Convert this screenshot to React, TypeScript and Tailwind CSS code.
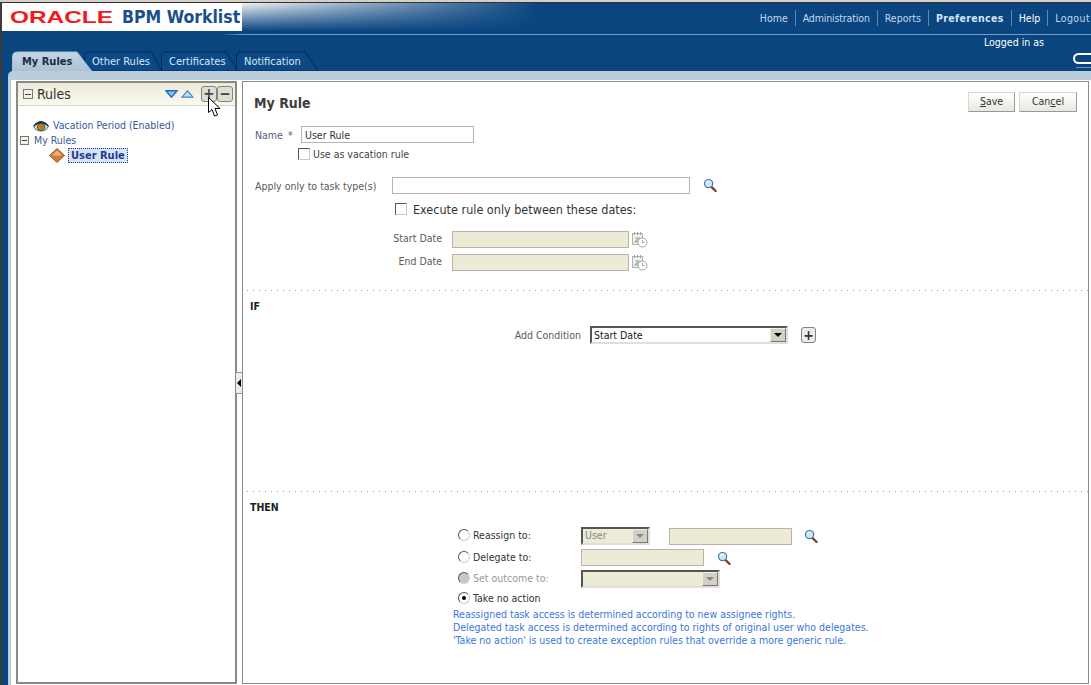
const NAV = [
  { label: 'Home', cls: 'text-[#c5d8ee]' },
  { label: 'Administration', cls: 'text-[#c5d8ee] tracking-[-0.15px]' },
  { label: 'Reports', cls: 'text-[#c5d8ee]' },
  { label: 'Preferences', cls: 'text-[#d5e3f3] font-bold tracking-[0.35px]' },
  { label: 'Help', cls: 'text-white' },
  { label: 'Logout', cls: 'text-[#c5d8ee] tracking-[0.4px]' },
]

function Tab({ label, active, width, wrap, peak }: { label: string; active?: boolean; width: number; wrap: string; peak: number }) {
  const d = `M0.5 20 L0.5 6 Q0.5 1 5.5 1 L${peak} 1 L${width - 0.5} 20`
  return (
    <div className={`relative h-[20px] shrink-0 ${wrap}`}>
      <svg width={width} height={20} className="absolute left-0 top-0">
        <defs>
          <linearGradient id="tabon" x1="0" x2="0" y1="0" y2="1">
            <stop offset="0" stopColor="#c4d6e4" />
            <stop offset="1" stopColor="#a9c2d6" />
          </linearGradient>
        </defs>
        <path d={d + ' Z'} fill={active ? 'url(#tabon)' : '#0b4a87'} stroke={active ? '#a9c2d6' : '#062a55'} />
      </svg>
      <span className={`relative block text-[11px] leading-[21px] whitespace-nowrap ${active ? 'pl-[10px] font-bold text-[#1c2a3c]' : 'pl-[8px] text-[#dbe7f3]'}`}>{label}</span>
    </div>
  )
}

function Magnifier() {
  return (
    <svg width="14" height="14" viewBox="0 0 15 15" className="shrink-0">
      <path d="M9 9.5 L13.5 14" stroke="#8a3a20" strokeWidth="2.4" strokeLinecap="round" />
      <circle cx="6" cy="6" r="4.4" fill="#cfe6f4" stroke="#3f7aa8" strokeWidth="1.3" />
      <path d="M3.5 5.5 A3 3 0 0 1 6 3.2" fill="none" stroke="#fff" strokeWidth="1.2" />
    </svg>
  )
}

function CalendarClock() {
  return (
    <svg width="17" height="17" viewBox="0 0 17 17" className="shrink-0">
      <rect x="1.5" y="2.5" width="10" height="11" fill="#f3f3ee" stroke="#b0b4b0" />
      <path d="M3.5 1 v3 M6.5 1 v3 M9.5 1 v3" stroke="#a0a4a0" />
      <path d="M4 7 h4 l-4 4 h4" fill="none" stroke="#a0a4a0" strokeWidth="1.2" />
      <circle cx="11.5" cy="11.5" r="4.5" fill="#fff" stroke="#a0a4a0" />
      <path d="M11.5 9 v2.5 h2.2" fill="none" stroke="#a0a4a0" />
    </svg>
  )
}

function Check() {
  return <div className="h-[12px] w-[12px] shrink-0 border border-b-[#c8c8c8] border-l-[#555] border-r-[#c8c8c8] border-t-[#555] bg-white" />
}

function Radio({ on, off }: { on?: boolean; off?: boolean }) {
  return (
    <div className={`flex h-[12px] w-[12px] shrink-0 -translate-y-px items-center justify-center rounded-full border border-b-[#d0d0d0] border-l-[#555] border-r-[#d0d0d0] border-t-[#555] ${off ? 'bg-[#c8c8c0]' : 'bg-white'}`}>
      {on && <div className="h-[4px] w-[4px] rounded-full bg-black" />}
    </div>
  )
}

function Arrow({ grey }: { grey?: boolean }) {
  return (
    <div className="flex h-full w-[16px] shrink-0 items-center justify-center border border-b-[#777] border-l-[#eee] border-r-[#777] border-t-[#eee] bg-[#d4d0c8]">
      <div className={`h-0 w-0 border-x-[4px] border-t-[4px] border-x-transparent ${grey ? 'border-t-[#888]' : 'border-t-black'}`} />
    </div>
  )
}

function Dots() {
  return <div className="ml-[4px] h-px bg-[repeating-linear-gradient(to_right,#999_0,#999_1px,transparent_1px,transparent_6px)]" />
}

export default function App() {
  return (
    <div className="relative flex h-[685px] w-[1091px] flex-col overflow-hidden bg-white font-['DejaVu_Sans_Condensed','DejaVu_Sans',sans-serif] text-[10.5px] [font-stretch:condensed]">
      <div className="h-[3px] shrink-0 border-b border-[#333] bg-[#d4d0c8]" />

      <div className="relative h-[68px] shrink-0 border-l-2 border-[#3c3c3c] bg-[#0a4580]">
        <div className="flex h-[28px]">
          <div className="flex w-[240px] shrink-0 items-center bg-white pl-[8px]">
            <svg width="106" height="20" className="shrink-0">
              <text x="0" y="16" fontFamily="Liberation Sans" fontSize="17" fontWeight="700" fill="#f01c1c" textLength="103" lengthAdjust="spacingAndGlyphs">ORACLE</text>
            </svg>
            <span className="ml-[6px] text-[17.5px] font-bold whitespace-nowrap text-[#1a4f8c]">BPM Worklist</span>
          </div>
          <div className="flex flex-1 items-center justify-end bg-[linear-gradient(to_right,transparent,#0a4580_35%),linear-gradient(to_bottom,#f0f2f5,#0a4580)] pt-[2px]">
            {NAV.map((n, i) => (
              <span key={n.label} className={`px-[7px] leading-[16px] whitespace-nowrap last:pr-[1px] ${i > 0 ? 'border-l border-[#5f8ab8]' : ''} ${n.cls}`}>{n.label}</span>
            ))}
          </div>
        </div>
        <div className="mt-[3px] h-px bg-[linear-gradient(to_right,transparent_20%,#6f9ed0_22%)]" />
        <div className="h-[16px] pr-[47px] text-right leading-[15px] text-white">Logged in as</div>
        <div className="flex h-[20px] items-start justify-between pl-[10px]">
          <div className="flex">
            <Tab label="My Rules" active width={80} peak={65} wrap="z-40 w-[80px]" />
            <Tab label="Other Rules" width={78} peak={67} wrap="z-30 -ml-[8px] w-[78px]" />
            <Tab label="Certificates" width={77} peak={65} wrap="z-20 -ml-[1px] w-[77px]" />
            <Tab label="Notification" width={82} peak={69} wrap="z-10 -ml-[2px] w-[82px]" />
          </div>
          <div className="mt-[2px] w-[18px] overflow-hidden">
            <div className="h-[11px] w-[30px] rounded-full border-2 border-white" />
            <div className="mt-[3px] ml-[3px] h-px bg-[#6f93b8]" />
          </div>
        </div>
      </div>

      <div className="flex min-h-0 flex-1 border-l-2 border-[#3c3c3c] bg-[#0a4580] pl-[6px]">
        <div className="flex min-w-0 flex-1 flex-col rounded-tl-[5px] bg-[#b9cddd] pt-[9px] pl-[3px]">
          <div className="flex min-h-0 flex-1 bg-white pl-[5px] pt-px pr-[2px] pb-px">
            {/* left panel */}
            <div className="flex w-[221px] shrink-0 flex-col border-2 border-[#8a8a80]">
              <div className="flex h-[23px] shrink-0 items-center border-b border-[#d4d4bc] bg-[linear-gradient(to_bottom,#ecebd9,#f9f9f1)] pl-[5px] pr-[2px]">
                <div className="flex h-[10px] w-[10px] shrink-0 items-center justify-center border border-[#777] bg-[#f2f2ea]">
                  <div className="h-px w-[6px] bg-[#444]" />
                </div>
                <span className="ml-[4px] text-[14px] text-[#333]">Rules</span>
                <svg width="13" height="8" viewBox="0 0 13 8" className="ml-auto shrink-0">
                  <path d="M1 0.8 H12 L6.5 7.2 Z" fill="#8cc4ee" stroke="#1f6cc0" strokeWidth="1.4" />
                </svg>
                <svg width="13" height="8" viewBox="0 0 13 8" className="ml-[3px] shrink-0">
                  <path d="M1 7.2 H12 L6.5 0.8 Z" fill="#c4e0f6" stroke="#3f8ad0" strokeWidth="1.2" />
                </svg>
                <div className="ml-[7px] flex h-[16px] w-[16px] items-center justify-center rounded-[3px] border border-[#80847c] bg-[#dedfd4] text-[15px] font-bold leading-none text-[#444]">+</div>
                <div className="flex h-[16px] w-[16px] items-center justify-center rounded-[3px] border border-[#80847c] bg-[#dedfd4] text-[15px] font-bold leading-none text-[#444]">−</div>
              </div>
              <div className="pt-[12px] text-[#3c5696]">
                <div className="flex h-[15px] items-center pl-[15px]">
                  <svg width="16" height="12" viewBox="0 0 16 12" className="shrink-0">
                    <ellipse cx="8" cy="6.5" rx="7" ry="4.5" fill="#cfd9e4" stroke="#5a7088" />
                    <path d="M0.5 6 Q8 -3 15.5 6 Q8 0.5 0.5 6 Z" fill="#1f2f42" stroke="#1f2f42" />
                    <circle cx="8" cy="7" r="3.6" fill="#b98a2a" stroke="#5b4a2a" />
                    <circle cx="8" cy="7" r="1.3" fill="#e85a10" />
                  </svg>
                  <span className="ml-[4px] whitespace-nowrap">Vacation Period (Enabled)</span>
                </div>
                <div className="flex h-[15px] items-center pl-[2px]">
                  <div className="flex h-[9px] w-[9px] shrink-0 items-center justify-center border border-[#777] bg-[#f2f2ea]">
                    <div className="h-px w-[5px] bg-[#444]" />
                  </div>
                  <span className="ml-[5px]">My Rules</span>
                </div>
                <div className="-mt-[1px] flex h-[16px] items-center pl-[31px]">
                  <svg width="16" height="15" viewBox="0 0 16 15" className="shrink-0">
                    <path d="M8 0.5 L15.5 7.5 L8 14.5 L0.5 7.5 Z" fill="#d07a3e" stroke="#9a6038" />
                    <path d="M8 2.5 L13 7.5 L8 7.5 L3 7.5 Z" fill="#f0b078" />
                  </svg>
                  <span className="ml-[3px] border border-dotted border-[#1f3a8a] bg-[#d8e4f4] px-[2px] text-[11px] font-bold leading-[13px] text-[#1c3a96]">User Rule</span>
                </div>
              </div>
            </div>

            {/* splitter */}
            <div className="flex w-[5px] shrink-0 items-center">
              <div className="flex h-[22px] w-[6px] shrink-0 -translate-x-px items-center justify-center border-y border-[#7f9cc0] bg-[#e6edf5]">
                <div className="h-0 w-0 border-y-[4px] border-r-[4px] border-y-transparent border-r-black" />
              </div>
            </div>

            {/* right panel */}
            <div className="min-w-0 flex-1 border border-[#8a8a8a]">
              <div className="flex items-start justify-between pl-[11px] pr-[11px] pt-[10px]">
                <span className="translate-y-px text-[14px] font-bold leading-[20px] text-[#3c3c3c]">My Rule</span>
                <div className="flex gap-[4px]">
                  <div className="flex h-[20px] w-[47px] items-center justify-center border border-[#d8d8d0] border-b-[#999] border-r-[#999] bg-[linear-gradient(to_bottom,#fff,#e8e8e0)] text-[#333]"><span><u>S</u>ave</span></div>
                  <div className="flex h-[20px] w-[58px] items-center justify-center border border-[#d8d8d0] border-b-[#999] border-r-[#999] bg-[linear-gradient(to_bottom,#fff,#e8e8e0)] text-[#333]"><span>Can<u>c</u>el</span></div>
                </div>
              </div>

              <div className="mt-[14px] flex h-[17px] items-center pl-[12px] text-[#556078]">
                <span className="w-[33px] shrink-0 translate-y-px">Name</span>
                <span className="w-[13px] shrink-0 translate-y-px">*</span>
                <div className="flex h-full w-[173px] items-center border border-[#c0aeb2] pl-[3px] text-[#333]"><span className="translate-y-px">User Rule</span></div>
              </div>
              <div className="mt-[4px] flex h-[14px] items-center pl-[55px] text-[#444]">
                <Check />
                <span className="ml-[3px] translate-y-px">Use as vacation rule</span>
              </div>

              <div className="mt-[16px] flex h-[17px] items-center pl-[12px] text-[#5a5a5a]">
                <span className="w-[137px] shrink-0 translate-y-px whitespace-nowrap">Apply only to task type(s)</span>
                <div className="h-full w-[298px] shrink-0 border border-[#c0aeb2]" />
                <div className="ml-[13px] -translate-y-px"><Magnifier /></div>
              </div>
              <div className="mt-[8px] flex h-[14px] items-center pl-[152px] text-[12.5px] text-[#333]">
                <Check />
                <span className="ml-[6px] translate-y-px whitespace-nowrap">Execute rule only between these dates:</span>
              </div>

              <div className="mt-[15px] flex h-[17px] items-center text-[#5f5a4e]">
                <span className="w-[199px] shrink-0 -translate-y-px text-right">Start Date</span>
                <div className="ml-[10px] h-full w-[177px] shrink-0 border border-[#c0aeb2] bg-[#ebebd6]" />
                <div className="ml-[2px]"><CalendarClock /></div>
              </div>
              <div className="mt-[6px] flex h-[17px] items-center text-[#5f5a4e]">
                <span className="w-[199px] shrink-0 -translate-y-px text-right">End Date</span>
                <div className="ml-[10px] h-full w-[177px] shrink-0 border border-[#c0aeb2] bg-[#ebebd6]" />
                <div className="ml-[2px]"><CalendarClock /></div>
              </div>

              <div className="mt-[19px]"><Dots /></div>
              <div className="h-[200px] pt-[9px]">
                <div className="pl-[7px] font-bold leading-[13px] text-[#222]">IF</div>
                <div className="mt-[13px] flex h-[17px] items-center text-[#5f5a4e]">
                  <span className="w-[338px] shrink-0 translate-y-px text-right">Add Condition</span>
                  <div className="ml-[9px] flex h-[18px] w-[198px] shrink-0 items-center border-2 border-b-[#e0e0d8] border-l-[#555] border-r-[#e0e0d8] border-t-[#555] bg-white pl-[2px] text-[#222]">
                    <span className="flex-1 translate-y-px">Start Date</span>
                    <Arrow />
                  </div>
                  <div className="ml-[13px] flex h-[16px] w-[15px] items-center justify-center rounded-[3px] border border-[#80847c] bg-[#ecede6] text-[14px] font-bold leading-none text-[#334]">+</div>
                </div>
              </div>

              <Dots />
              <div className="mt-[9px] pl-[7px] font-bold leading-[13px] text-[#222]">THEN</div>

              <div className="mt-[13px] flex h-[18px] items-center pl-[215px] text-[#333]">
                <Radio />
                <span className="ml-[3px] w-[108px] shrink-0">Reassign to:</span>
                <div className="flex h-full w-[69px] shrink-0 items-center border-2 border-b-[#e0e0d8] border-l-[#555] border-r-[#e0e0d8] border-t-[#555] bg-[#ebebd6] pl-[2px] text-[#888]">
                  <span className="flex-1">User</span>
                  <Arrow grey />
                </div>
                <div className="ml-[19px] h-[17px] w-[123px] shrink-0 border border-[#c0aeb2] bg-[#ebebd6]" />
                <div className="ml-[12px]"><Magnifier /></div>
              </div>
              <div className="mt-[4px] flex h-[17px] items-center pl-[215px] text-[#333]">
                <Radio />
                <span className="ml-[3px] w-[108px] shrink-0">Delegate to:</span>
                <div className="h-full w-[123px] shrink-0 border border-[#c0aeb2] bg-[#ebebd6]" />
                <div className="ml-[13px]"><Magnifier /></div>
              </div>
              <div className="mt-[4px] flex h-[18px] items-center pl-[215px] text-[#999]">
                <Radio off />
                <span className="ml-[3px] w-[108px] shrink-0">Set outcome to:</span>
                <div className="flex h-full w-[139px] shrink-0 items-center justify-end border-2 border-b-[#e0e0d8] border-l-[#555] border-r-[#e0e0d8] border-t-[#555] bg-[#ebebd6]">
                  <Arrow grey />
                </div>
              </div>
              <div className="mt-[4px] flex h-[14px] items-center pl-[215px] text-[#333]">
                <Radio on />
                <span className="ml-[3px]">Take no action</span>
              </div>
              <div className="mt-[2px] pl-[210px] leading-[13px] whitespace-nowrap text-[#3b78d8]">
                <div>Reassigned task access is determined according to new assignee rights.</div>
                <div>Delegated task access is determined according to rights of original user who delegates.</div>
                <div>'Take no action' is used to create exception rules that override a more generic rule.</div>
              </div>
            </div>
          </div>
        </div>
      </div>

      {/* mouse pointer over the add button */}
      <svg width="14" height="21" viewBox="0 0 14 21" className="absolute left-[208px] top-[97px]">
        <path d="M0.5 0.5 L0.5 15.5 L4 12.5 L6.5 19 L9.5 18 L7 11.5 L12 11.5 Z" fill="#fff" stroke="#000" />
      </svg>
    </div>
  )
}
